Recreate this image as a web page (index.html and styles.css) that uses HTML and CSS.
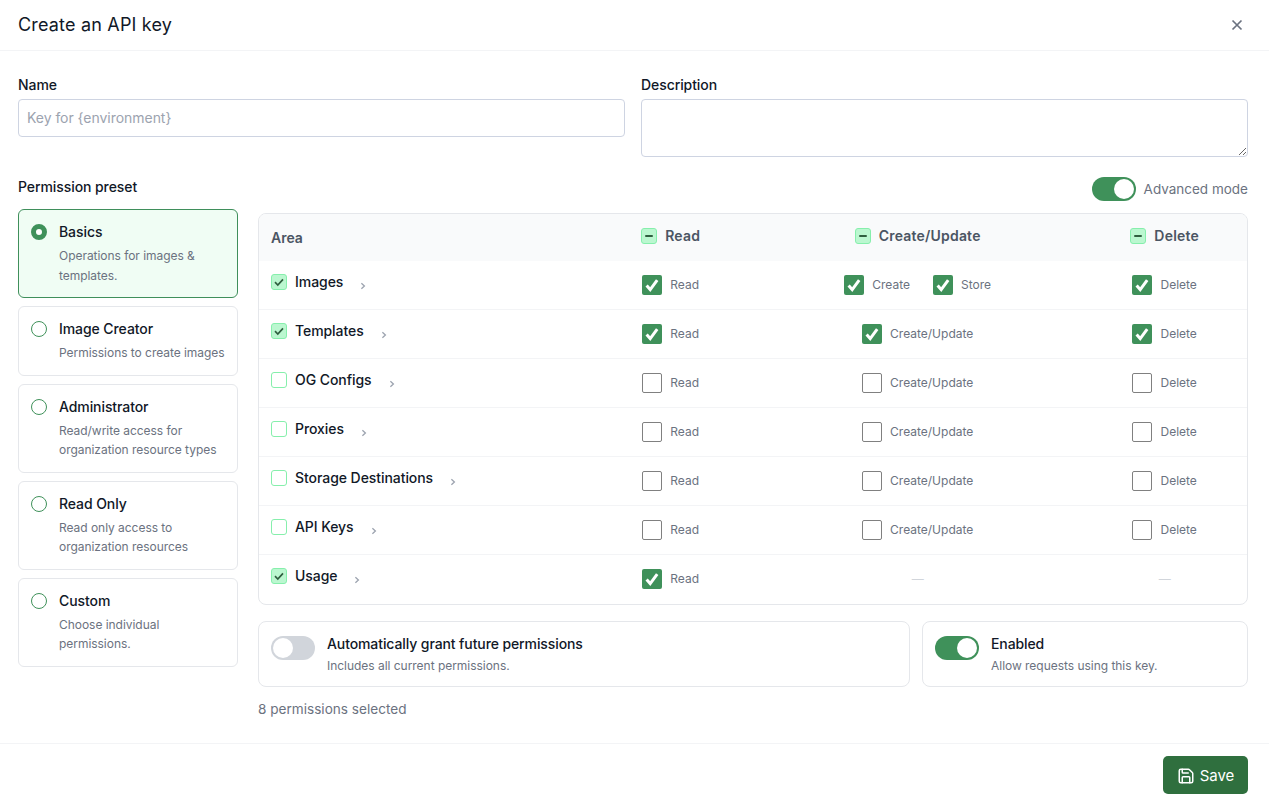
FILE: index.html
```html
<!DOCTYPE html>
<html lang="en">
<head>
<meta charset="utf-8">
<title>Create an API key</title>
<link rel="stylesheet" href="styles.css">
</head>
<body>
<svg class="defs" width="0" height="0" aria-hidden="true">
  <symbol id="tick" viewBox="0 0 20 20"><path d="M4.6 10.6 8.2 14.6 15.2 5.2" fill="none" stroke="currentColor" stroke-width="3"/></symbol>
  <symbol id="smalltick" viewBox="0 0 16 16"><path d="M4 8.2 6.8 11 12 5.4" fill="none" stroke="currentColor" stroke-width="1.7"/></symbol>
  <symbol id="chev" viewBox="0 0 8 8"><path d="M2.4 1.2 5.4 4 2.4 6.8" fill="none" stroke="currentColor" stroke-width="1.3"/></symbol>
</svg>
<div class="dialog">
  <header class="top">
    <h1 class="title">Create an API key</h1>
    <svg class="close" viewBox="0 0 12 12"><path d="M1.5 1.5 10.5 10.5M10.5 1.5 1.5 10.5" fill="none" stroke="currentColor" stroke-width="1.7"/></svg>
  </header>
  <main class="body">
    <div class="fields">
      <label class="field"><span class="label">Name</span><input class="input" placeholder="Key for {environment}"></label>
      <label class="field"><span class="label">Description</span><textarea class="textarea"></textarea></label>
    </div>
    <div class="split">
      <aside class="presets">
        <div class="label preset-head">Permission preset</div>
        <div class="preset-list">
          <div class="preset selected"><span class="radio on"></span><div><div class="preset-name">Basics</div><div class="preset-desc">Operations for images &amp; templates.</div></div></div>
          <div class="preset"><span class="radio"></span><div><div class="preset-name">Image Creator</div><div class="preset-desc">Permissions to create images</div></div></div>
          <div class="preset"><span class="radio"></span><div><div class="preset-name">Administrator</div><div class="preset-desc">Read/write access for organization resource types</div></div></div>
          <div class="preset"><span class="radio"></span><div><div class="preset-name">Read Only</div><div class="preset-desc">Read only access to organization resources</div></div></div>
          <div class="preset"><span class="radio"></span><div><div class="preset-name">Custom</div><div class="preset-desc">Choose individual permissions.</div></div></div>
        </div>
      </aside>
      <section class="panel">
        <div class="mode"><span class="toggle on"><i></i></span><span class="mode-text">Advanced mode</span></div>
        <div class="table">
          <div class="row head">
            <div class="area-head">Area</div>
            <div class="col-head"><span class="mini"><b></b></span>Read</div>
            <div class="col-head"><span class="mini"><b></b></span>Create/Update</div>
            <div class="col-head"><span class="mini"><b></b></span>Delete</div>
          </div>

          <div class="row">
            <div class="area"><span class="area-name"><span class="mini"><svg><use href="#smalltick"/></svg></span>Images</span><svg class="chev"><use href="#chev"/></svg></div>
            <div class="cell"><span class="check on"><svg><use href="#tick"/></svg></span>Read</div>
            <div class="cell wide"><span class="pair"><span class="check on"><svg><use href="#tick"/></svg></span>Create</span><span class="pair"><span class="check on"><svg><use href="#tick"/></svg></span>Store</span></div>
            <div class="cell"><span class="check on"><svg><use href="#tick"/></svg></span>Delete</div>
          </div>
          <div class="row">
            <div class="area"><span class="area-name"><span class="mini"><svg><use href="#smalltick"/></svg></span>Templates</span><svg class="chev"><use href="#chev"/></svg></div>
            <div class="cell"><span class="check on"><svg><use href="#tick"/></svg></span>Read</div>
            <div class="cell"><span class="check on"><svg><use href="#tick"/></svg></span>Create/Update</div>
            <div class="cell"><span class="check on"><svg><use href="#tick"/></svg></span>Delete</div>
          </div>
          <div class="row">
            <div class="area"><span class="area-name"><span class="mini off"></span>OG Configs</span><svg class="chev"><use href="#chev"/></svg></div>
            <div class="cell"><span class="check"></span>Read</div>
            <div class="cell"><span class="check"></span>Create/Update</div>
            <div class="cell"><span class="check"></span>Delete</div>
          </div>
          <div class="row">
            <div class="area"><span class="area-name"><span class="mini off"></span>Proxies</span><svg class="chev"><use href="#chev"/></svg></div>
            <div class="cell"><span class="check"></span>Read</div>
            <div class="cell"><span class="check"></span>Create/Update</div>
            <div class="cell"><span class="check"></span>Delete</div>
          </div>
          <div class="row">
            <div class="area"><span class="area-name"><span class="mini off"></span>Storage Destinations</span><svg class="chev"><use href="#chev"/></svg></div>
            <div class="cell"><span class="check"></span>Read</div>
            <div class="cell"><span class="check"></span>Create/Update</div>
            <div class="cell"><span class="check"></span>Delete</div>
          </div>
          <div class="row">
            <div class="area"><span class="area-name"><span class="mini off"></span>API Keys</span><svg class="chev"><use href="#chev"/></svg></div>
            <div class="cell"><span class="check"></span>Read</div>
            <div class="cell"><span class="check"></span>Create/Update</div>
            <div class="cell"><span class="check"></span>Delete</div>
          </div>
          <div class="row">
            <div class="area"><span class="area-name"><span class="mini"><svg><use href="#smalltick"/></svg></span>Usage</span><svg class="chev"><use href="#chev"/></svg></div>
            <div class="cell"><span class="check on"><svg><use href="#tick"/></svg></span>Read</div>
            <div class="cell dash">—</div>
            <div class="cell dash">—</div>
          </div>
        </div>
        <div class="options">
          <div class="option"><span class="toggle"><i></i></span><div><div class="opt-title">Automatically grant future permissions</div><div class="opt-desc">Includes all current permissions.</div></div></div>
          <div class="option"><span class="toggle on"><i></i></span><div><div class="opt-title">Enabled</div><div class="opt-desc">Allow requests using this key.</div></div></div>
        </div>
        <div class="count">8 permissions selected</div>
      </section>
    </div>
  </main>
  <footer class="foot">
    <button class="save">
      <svg viewBox="0 0 24 24" fill="none" stroke="currentColor" stroke-width="2" stroke-linecap="round" stroke-linejoin="round"><path d="M15.2 3a2 2 0 0 1 1.4.6l3.8 3.8a2 2 0 0 1 .6 1.4V19a2 2 0 0 1-2 2H5a2 2 0 0 1-2-2V5a2 2 0 0 1 2-2z"/><path d="M17 21v-7a1 1 0 0 0-1-1H8a1 1 0 0 0-1 1v7"/><path d="M7 3v4a1 1 0 0 0 1 1h7"/></svg>
      Save
    </button>
  </footer>
</div>
</body>
</html>
```

FILE: styles.css
```css
* { box-sizing: border-box; }
html, body { margin: 0; padding: 0; background: #fff; }
body { font-family: Inter, "Liberation Sans", sans-serif; color: #111827; font-size: 14px; line-height: 20px; overflow: hidden; }
.defs { display: block; height: 0; }
.dialog { width: 1269px; height: 802px; display: flex; flex-direction: column; }
.top { height: 51px; flex: none; display: flex; align-items: center; justify-content: space-between; padding: 0 26px 1px 18px; border-bottom: 1px solid #f3f4f6; }
.title { margin: 0; font-size: 18px; font-weight: 400; line-height: 28px; letter-spacing: 0.18px; color: #111827; }
.close { width: 12px; height: 12px; color: #6b7280; }
.body { flex: 1; padding: 24px 21px 0 18px; }
.fields { display: grid; grid-template-columns: 1fr 1fr; gap: 16px; margin-bottom: 20px; }
.field { display: flex; flex-direction: column; align-items: stretch; }
.label { font-weight: 500; letter-spacing: -0.08px; color: #111827; display: block; }
.field .label { margin-bottom: 4px; }
.input, .textarea { display: block; width: 100%; border: 1px solid #ced4e2; border-radius: 4px; padding: 8px; font: 14px/20px Inter, sans-serif; color: #111827; background: #fff; outline: none; }
.input { height: 38px; padding-bottom: 9px; letter-spacing: -0.04px; }
.textarea { height: 58px; resize: vertical; }
.input::placeholder { color: #9ca3af; }
.split { display: flex; gap: 20px; }
.presets { width: 220px; flex: none; }
.preset-head { margin-bottom: 12px; }
.preset-list { display: flex; flex-direction: column; gap: 8px; }
.preset { display: flex; gap: 12px; padding: 12px 10px 12px 12px; border: 1px solid #e5e7eb; border-radius: 6px; background: #fff; }
.preset.selected { background: #f0fdf4; border-color: #3f8f5b; }
.radio { width: 16px; height: 16px; flex: none; margin-top: 2px; border-radius: 50%; border: 1px solid #3f915a; background: #fff; }
.radio.on { border: 5px solid #3f915a; }
.preset-name { font-weight: 500; letter-spacing: -0.08px; color: #111827; margin-bottom: 4px; }
.preset-desc { font-size: 12px; line-height: 19.5px; letter-spacing: -0.04px; color: #6b7280; }
.panel { flex: 1; min-width: 0; }
.mode { display: flex; justify-content: flex-end; align-items: center; gap: 8px; height: 24px; margin-bottom: 12px; }
.mode-text { color: #6b7280; font-size: 13.5px; }
.toggle { display: block; flex: none; width: 44px; height: 24px; border-radius: 12px; background: #d1d5db; padding: 2px; }
.toggle i { display: block; width: 20px; height: 20px; border-radius: 50%; background: #fff; }
.toggle.on { background: #3f915a; }
.toggle.on i { margin-left: 20px; }
.table { border: 1px solid #e5e7eb; border-radius: 8px; overflow: hidden; }
.row { display: grid; grid-template-columns: 2fr 1fr 2fr 1fr; height: 49px; border-bottom: 1px solid #f3f4f6; }
.row:last-child { border-bottom: 0; padding-bottom: 1px; }
.row.head { height: 47px; background: #f9fafb; border-bottom: 0; align-items: center; }
.area-head { padding-left: 12px; font-weight: 600; color: #4b5563; }
.col-head { display: flex; align-items: center; justify-content: center; gap: 8px; font-weight: 600; letter-spacing: 0.2px; color: #4b5563; margin-bottom: 3px; }
.mini { width: 16px; height: 16px; flex: none; display: flex; align-items: center; justify-content: center; border: 1px solid #86efac; border-radius: 3px; background: #bbf7d0; color: #2f5f3f; }
.mini.off { background: #fff; }
.mini svg { width: 16px; height: 16px; flex: none; }
.mini b { display: block; width: 8px; height: 2px; background: #2f5f3f; border-radius: 1px; }
.area { display: flex; align-items: center; padding-left: 12px; gap: 18px; }
.area-name { display: flex; align-items: center; gap: 8px; font-weight: 500; letter-spacing: -0.06px; color: #111827; margin-bottom: 7px; }
.chev { width: 8px; height: 8px; color: #9ca3af; margin-top: 2px; margin-left: -2px; }
.cell { display: flex; align-items: center; justify-content: center; gap: 8px; font-size: 12px; color: #6b7280; }
.cell.wide { gap: 23px; }
.pair { display: flex; align-items: center; gap: 8px; }
.check { width: 20px; height: 20px; flex: none; border: 1px solid #808080; border-radius: 2px; background: #fff; display: block; }
.check.on { border: 0; background: #3f915a; color: #fff; }
.check svg { display: block; width: 20px; height: 20px; }
.dash { color: #d1d5db; font-size: 12px; }
.options { display: grid; grid-template-columns: 2fr 1fr; gap: 12px; margin-top: 16px; }
.option { display: flex; gap: 12px; height: 66px; padding: 14px 12px; border: 1px solid #e5e7eb; border-radius: 8px; }
.opt-title { font-weight: 500; letter-spacing: -0.1px; color: #111827; margin-top: -2px; margin-bottom: 2px; }
.opt-desc { font-size: 12px; line-height: 20px; letter-spacing: -0.03px; color: #6b7280; }
.count { margin-top: 12px; color: #6b7280; font-size: 13.6px; }
.foot { height: 59px; flex: none; border-top: 1px solid #f3f4f6; display: flex; justify-content: flex-end; align-items: flex-start; padding: 12px 21px 0 0; }
.save { display: flex; align-items: center; gap: 5px; height: 38px; width: 85px; justify-content: center; border: 0; border-radius: 5px; background: #2f6f3e; color: #fff; font: 15px/20px Inter, sans-serif; padding: 1px 0 0 0; }
.save svg { width: 18px; height: 18px; }
```
